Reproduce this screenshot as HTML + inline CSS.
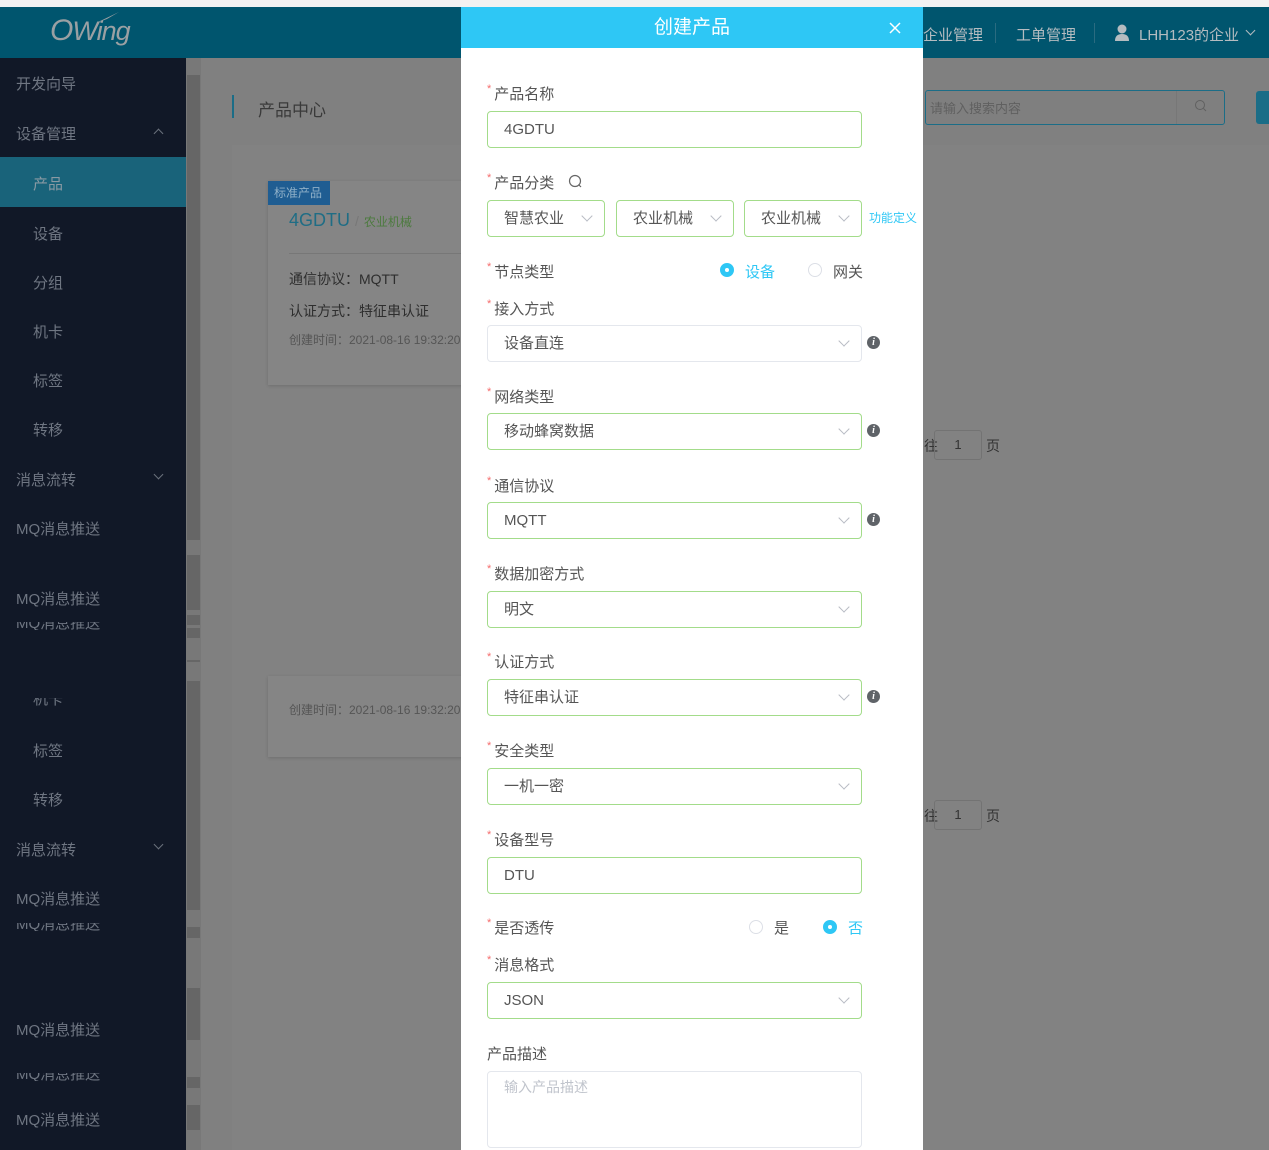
<!DOCTYPE html>
<html><head><meta charset="utf-8">
<style>
*{margin:0;padding:0;box-sizing:border-box}
body{width:1269px;height:1150px;overflow:hidden;position:relative;background:#808080;font-family:"Liberation Sans","Noto Sans CJK SC",sans-serif;font-size:14px}
.a{position:absolute;white-space:nowrap}
.sb{color:#6f7682;font-size:15px}
.lbl{color:#555;font-size:15px;left:487px}
.lbl i{color:#f56c6c;font-style:normal;font-size:11px;margin-right:3px;vertical-align:top}
.in{position:absolute;left:487px;width:375px;height:37px;border:1px solid #a3dc8a;border-radius:4px;background:#fff;color:#555;font-size:15px;padding-left:16px;line-height:35px}
.in.g{border-color:#e4e7ed}
.chev{position:absolute;right:13px;top:11px;width:8px;height:8px;border-right:1px solid #b8bcc4;border-bottom:1px solid #b8bcc4;transform:rotate(45deg)}
.info{position:absolute;left:867px;width:13px;height:13px;border-radius:50%;background:#5f6368;color:#fff;font:italic bold 10px/13px "Liberation Serif",serif;text-align:center}
.rad{position:absolute;width:14px;height:14px;border-radius:50%;border:1px solid #dcdfe6;background:#fff}
.rad.on{background:#2ec7f5;border-color:#2ec7f5}
.rad.on:after{content:"";position:absolute;left:4px;top:4px;width:4px;height:4px;border-radius:50%;background:#fff}
.thumb{position:absolute;left:187px;width:13px;background:#666}
</style></head><body>
<div class="a" style="left:0;top:0;width:1269px;height:7px;background:#f2f2f2"></div>
<div class="a" style="left:0;top:7px;width:1269px;height:51px;background:#00556e"></div>
<div class="a" style="left:50px;top:14px;color:#9aa0a3;font:italic 30px 'Liberation Sans',sans-serif;letter-spacing:-1px">O<span style="font-size:27px">Wing</span></div>
<svg class="a" style="left:95px;top:11px" width="25" height="14"><path d="M1 12 L24 1 L12 8 Z" fill="#9aa0a3"/></svg>
<div class="a" style="left:923px;top:24px;color:#b5bcc0;font-size:15px">企业管理</div>
<div class="a" style="left:995px;top:23px;width:1px;height:20px;background:#2a6b80"></div>
<div class="a" style="left:1016px;top:24px;color:#b5bcc0;font-size:15px">工单管理</div>
<div class="a" style="left:1094px;top:23px;width:1px;height:20px;background:#2a6b80"></div>
<svg class="a" style="left:1114px;top:24px" width="16" height="17"><circle cx="8" cy="5" r="4.5" fill="#b5bcc0"/><path d="M1 17 Q1 10 8 10 Q15 10 15 17Z" fill="#b5bcc0"/></svg>
<div class="a" style="left:1139px;top:24px;color:#b5bcc0;font-size:15px">LHH123的企业</div>
<div class="a" style="left:1247px;top:27px;width:7px;height:7px;border-right:1px solid #b5bcc0;border-bottom:1px solid #b5bcc0;transform:rotate(45deg)"></div>

<div class="a" style="left:0;top:58px;width:186px;height:1092px;background:#111827"></div>
<div class="a" style="left:0;top:157px;width:186px;height:50px;background:#19637a"></div>
<div class="a sb" style="left:16px;top:73px">开发向导</div>
<div class="a sb" style="left:16px;top:123px">设备管理</div>
<div class="a" style="left:155px;top:130px;width:7px;height:7px;border-left:1px solid #6a717c;border-top:1px solid #6a717c;transform:rotate(45deg)"></div>
<div class="a sb" style="left:33px;top:173px;color:#8a9aa3">产品</div>
<div class="a sb" style="left:33px;top:223px">设备</div>
<div class="a sb" style="left:33px;top:272px">分组</div>
<div class="a sb" style="left:33px;top:321px">机卡</div>
<div class="a sb" style="left:33px;top:370px">标签</div>
<div class="a sb" style="left:33px;top:419px">转移</div>
<div class="a sb" style="left:16px;top:469px">消息流转</div>
<div class="a" style="left:155px;top:471px;width:7px;height:7px;border-right:1px solid #6a717c;border-bottom:1px solid #6a717c;transform:rotate(45deg)"></div>
<div class="a sb" style="left:16px;top:518px">MQ消息推送</div>
<div class="a sb" style="left:16px;top:588px">MQ消息推送</div>
<div class="a sb" style="left:16px;top:622px;height:8px;overflow:hidden;line-height:4px">MQ消息推送</div>
<div class="a sb" style="left:33px;top:698px;height:8px;overflow:hidden;line-height:4px">机卡</div>
<div class="a sb" style="left:33px;top:740px">标签</div>
<div class="a sb" style="left:33px;top:789px">转移</div>
<div class="a sb" style="left:16px;top:839px">消息流转</div>
<div class="a" style="left:155px;top:841px;width:7px;height:7px;border-right:1px solid #6a717c;border-bottom:1px solid #6a717c;transform:rotate(45deg)"></div>
<div class="a sb" style="left:16px;top:888px">MQ消息推送</div>
<div class="a sb" style="left:16px;top:923px;height:8px;overflow:hidden;line-height:4px">MQ消息推送</div>
<div class="a sb" style="left:16px;top:1019px">MQ消息推送</div>
<div class="a sb" style="left:16px;top:1073px;height:8px;overflow:hidden;line-height:4px">MQ消息推送</div>
<div class="a sb" style="left:16px;top:1109px">MQ消息推送</div>

<div class="a" style="left:186px;top:58px;width:15px;height:1092px;background:#787878"></div>
<div class="thumb" style="top:75px;height:465px"></div>
<div class="thumb" style="top:555px;height:55px"></div>
<div class="thumb" style="top:615px;height:10px"></div>
<div class="thumb" style="top:628px;height:10px"></div>
<div class="thumb" style="top:660px;height:2px"></div>
<div class="thumb" style="top:681px;height:196px"></div>
<div class="thumb" style="top:872px;height:38px"></div>
<div class="thumb" style="top:927px;height:11px"></div>
<div class="thumb" style="top:988px;height:52px"></div>
<div class="thumb" style="top:1077px;height:11px"></div>
<div class="thumb" style="top:1105px;height:25px"></div>

<div class="a" style="left:232px;top:95px;width:2px;height:23px;background:#1b6d87"></div>
<div class="a" style="left:258px;top:96px;color:#3a3a3a;font-size:17px">产品中心</div>
<div class="a" style="left:232px;top:145px;width:1037px;height:1005px;background:#828282"></div>
<div class="a" style="left:925px;top:90px;width:300px;height:35px;border:1px solid #1b6d87;border-radius:3px;background:#7f7f7f"></div>
<div class="a" style="left:1176px;top:91px;width:1px;height:33px;background:#777"></div>
<div class="a" style="left:930px;top:98px;color:#606060;font-size:13px">请输入搜索内容</div>
<svg class="a" style="left:1194px;top:99px" width="14" height="14"><circle cx="6" cy="6" r="4.5" fill="none" stroke="#606060"/><path d="M9.5 9.5 L12 12" stroke="#606060"/></svg>
<div class="a" style="left:1256px;top:91px;width:20px;height:33px;background:#1b6d87;border-radius:3px"></div>
<div class="a" style="left:268px;top:181px;width:200px;height:204px;background:#858585;box-shadow:0 1px 3px rgba(0,0,0,.15)"></div>
<div class="a" style="left:268px;top:181px;width:62px;height:24px;background:#1f5d92;color:#8fb0c8;font-size:12px;line-height:24px;padding-left:6px">标准产品</div>
<div class="a" style="left:289px;top:210px;color:#1f6d85;font-size:18px">4GDTU <span style="color:#777;font-size:14px">/</span> <span style="color:#4c7a3e;font-size:12px">农业机械</span></div>
<div class="a" style="left:289px;top:253px;width:180px;height:1px;background:#777"></div>
<div class="a" style="left:289px;top:269px;color:#2e2e2e;font-size:14px">通信协议：MQTT</div>
<div class="a" style="left:289px;top:301px;color:#2e2e2e;font-size:14px">认证方式：特征串认证</div>
<div class="a" style="left:289px;top:331px;color:#555;font-size:12px">创建时间：2021-08-16 19:32:20</div>
<div class="a" style="left:268px;top:676px;width:200px;height:81px;background:#858585;box-shadow:0 1px 3px rgba(0,0,0,.15)"></div>
<div class="a" style="left:289px;top:701px;color:#555;font-size:12px">创建时间：2021-08-16 19:32:20</div>
<div class="a" style="left:924px;top:436px;color:#333;font-size:14px">往</div>
<div class="a" style="left:934px;top:430px;width:48px;height:30px;border:1px solid #737373;border-radius:3px;color:#333;text-align:center;line-height:28px;font-size:13px">1</div>
<div class="a" style="left:986px;top:436px;color:#333;font-size:14px">页</div>
<div class="a" style="left:924px;top:806px;color:#333;font-size:14px">往</div>
<div class="a" style="left:934px;top:800px;width:48px;height:30px;border:1px solid #737373;border-radius:3px;color:#333;text-align:center;line-height:28px;font-size:13px">1</div>
<div class="a" style="left:986px;top:806px;color:#333;font-size:14px">页</div>

<div class="a" style="left:461px;top:7px;width:462px;height:1143px;background:#fff"></div>
<div class="a" style="left:461px;top:7px;width:462px;height:41px;background:#2ec7f5;color:#fff;font-size:19px;text-align:center;line-height:41px">创建产品</div>
<svg class="a" style="left:889px;top:22px" width="12" height="12"><path d="M1 1 L11 11 M11 1 L1 11" stroke="#fff" stroke-width="1.5"/></svg>

<div class="a lbl" style="top:83px"><i>*</i>产品名称</div>
<div class="in" style="top:111px">4GDTU</div>
<div class="a lbl" style="top:172px"><i>*</i>产品分类</div>
<svg class="a" style="left:568px;top:174px" width="15" height="15"><circle cx="7" cy="7" r="5.5" fill="none" stroke="#666" stroke-width="1.2"/><path d="M10.5 10.5 L13 13" stroke="#666" stroke-width="1.2"/></svg>
<div class="in" style="top:200px;width:118px">智慧农业<span class="chev"></span></div>
<div class="in" style="top:200px;left:616px;width:118px">农业机械<span class="chev"></span></div>
<div class="in" style="top:200px;left:744px;width:118px">农业机械<span class="chev"></span></div>
<div class="a" style="left:869px;top:209px;color:#2ec7f5;font-size:12px">功能定义</div>
<div class="a lbl" style="top:261px"><i>*</i>节点类型</div>
<div class="rad on" style="left:720px;top:263px"></div>
<div class="a" style="left:745px;top:261px;color:#2ec7f5;font-size:15px">设备</div>
<div class="rad" style="left:808px;top:263px"></div>
<div class="a" style="left:833px;top:261px;color:#555;font-size:15px">网关</div>
<div class="a lbl" style="top:298px"><i>*</i>接入方式</div>
<div class="in g" style="top:325px">设备直连<span class="chev"></span></div>
<div class="info" style="top:336px">i</div>
<div class="a lbl" style="top:386px"><i>*</i>网络类型</div>
<div class="in" style="top:413px">移动蜂窝数据<span class="chev"></span></div>
<div class="info" style="top:424px">i</div>
<div class="a lbl" style="top:475px"><i>*</i>通信协议</div>
<div class="in" style="top:502px">MQTT<span class="chev"></span></div>
<div class="info" style="top:513px">i</div>
<div class="a lbl" style="top:563px"><i>*</i>数据加密方式</div>
<div class="in" style="top:591px">明文<span class="chev"></span></div>
<div class="a lbl" style="top:651px"><i>*</i>认证方式</div>
<div class="in" style="top:679px">特征串认证<span class="chev"></span></div>
<div class="info" style="top:690px">i</div>
<div class="a lbl" style="top:740px"><i>*</i>安全类型</div>
<div class="in" style="top:768px">一机一密<span class="chev"></span></div>
<div class="a lbl" style="top:829px"><i>*</i>设备型号</div>
<div class="in" style="top:857px">DTU</div>
<div class="a lbl" style="top:917px"><i>*</i>是否透传</div>
<div class="rad" style="left:749px;top:920px"></div>
<div class="a" style="left:774px;top:917px;color:#555;font-size:15px">是</div>
<div class="rad on" style="left:823px;top:920px"></div>
<div class="a" style="left:848px;top:917px;color:#2ec7f5;font-size:15px">否</div>
<div class="a lbl" style="top:954px"><i>*</i>消息格式</div>
<div class="in" style="top:982px">JSON<span class="chev"></span></div>
<div class="a lbl" style="top:1043px">产品描述</div>
<div class="in g" style="top:1071px;height:77px;color:#c0c4cc;line-height:30px;font-size:14px">输入产品描述</div>
</body></html>
